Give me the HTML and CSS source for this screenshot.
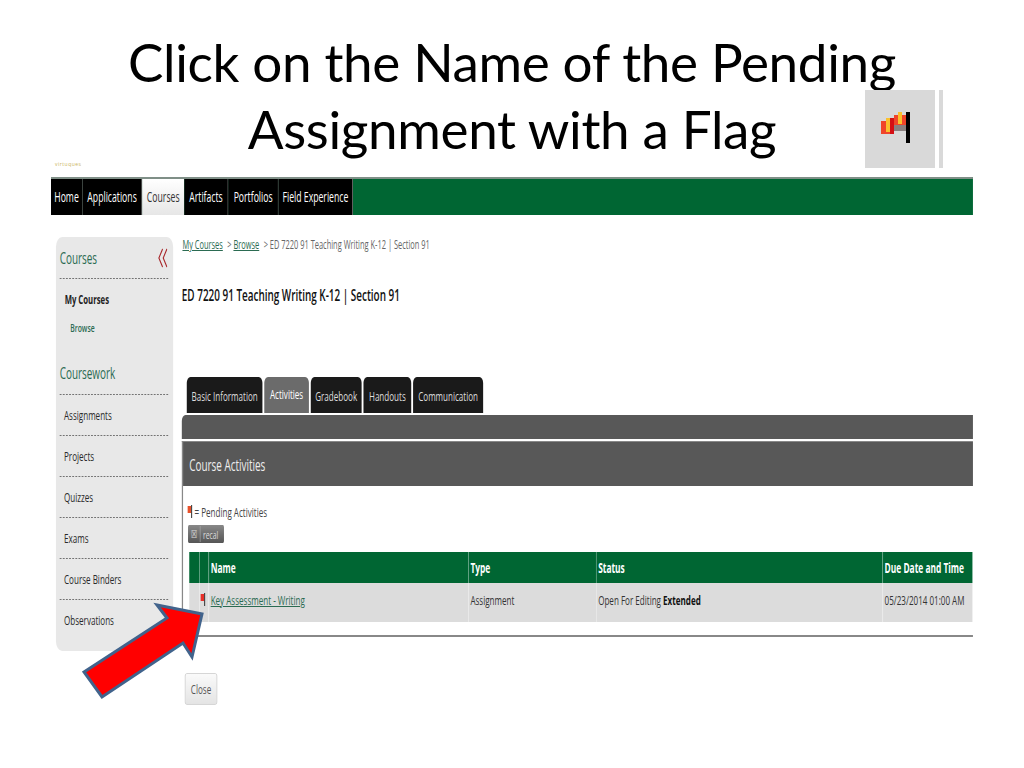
FILE: index.html
```html
<!DOCTYPE html>
<html lang="en">
<head>
  <meta charset="UTF-8">
  <title>Click on the Name of the Pending Assignment with a Flag</title>
  <link rel="stylesheet" href="styles.css">
</head>
<body>
  <div class="slide">
    <h1 class="title">Click on the Name of the Pending<br>Assignment with a Flag</h1>

    <div class="flag-box">
      <svg width="70" height="78" viewBox="0 0 70 78">
        <rect x="16" y="31" width="13" height="13" fill="#f0452a"/>
        <rect x="21" y="28" width="4" height="14" fill="#fbc02d"/>
        <rect x="25" y="28" width="4" height="16" fill="#d40f14"/>
        <rect x="29" y="25" width="12" height="13" fill="#f0452a"/>
        <rect x="33" y="22" width="4" height="12" fill="#fbc02d"/>
        <rect x="29" y="35" width="12" height="6" fill="#8a8080"/>
        <rect x="41" y="22" width="4" height="31" fill="#000"/>
      </svg>
    </div>
    <div class="flag-strip"></div>
    <p class="tiny">virtuques</p>

    <div class="shot">
      <div class="shot-inner">
        <ul class="nav">
          <li class="nav-home">Home</li>
          <li class="nav-apps">Applications</li>
          <li class="nav-courses">Courses</li>
          <li class="nav-artifacts">Artifacts</li>
          <li class="nav-portfolios">Portfolios</li>
          <li class="nav-field">Field Experience</li>
        </ul>

        <div class="main">
          <div class="sidebar">
            <div class="side-head">Courses
              <svg class="collapse" width="16" height="20" viewBox="0 0 16 20">
                <polyline points="8,1 2,10 8,19" fill="none" stroke="#a8282c" stroke-width="1.6"/>
                <polyline points="15,1 9,10 15,19" fill="none" stroke="#a8282c" stroke-width="1.6"/>
              </svg>
            </div>
            <div class="side-my">My Courses</div>
            <div class="side-browse">Browse</div>
            <div class="side-head side-work">Coursework</div>
            <div class="side-item">Assignments</div>
            <div class="side-item">Projects</div>
            <div class="side-item">Quizzes</div>
            <div class="side-item">Exams</div>
            <div class="side-item">Course Binders</div>
            <div class="side-item last">Observations</div>
          </div>

          <div class="content">
            <p class="crumbs"><a>My Courses</a> &gt; <a>Browse</a> &gt; ED 7220 91 Teaching Writing K-12 | Section 91</p>
            <h2 class="course-name">ED 7220 91 Teaching Writing K-12 | Section 91</h2>

            <div class="tabs">
              <div class="tab tab-basic">Basic Information</div>
              <div class="tab tab-act">Activities</div>
              <div class="tab tab-grade">Gradebook</div>
              <div class="tab tab-hand">Handouts</div>
              <div class="tab tab-comm">Communication</div>
            </div>
            <div class="tab-bar"></div>

            <div class="panel">
              <div class="panel-head">Course Activities</div>
              <div class="panel-body">
                <div class="legend">
                  <svg class="mini-flag" width="8" height="14" viewBox="0 0 8 14">
                    <rect x="0" y="1" width="6" height="7" fill="#e8502a"/>
                    <rect x="6" y="0" width="2" height="13" fill="#333"/>
                  </svg>
                  = Pending Activities
                </div>
                <div class="recall"><span class="recall-x">☒</span><span class="recall-text">recal</span></div>
                <table class="grid">
                  <tr>
                    <th class="c1"></th>
                    <th class="c2"></th>
                    <th class="c3">Name</th>
                    <th class="c4">Type</th>
                    <th class="c5">Status</th>
                    <th class="c6">Due Date and Time</th>
                  </tr>
                  <tr>
                    <td></td>
                    <td class="flag-cell">
                      <svg class="mini-flag" width="8" height="14" viewBox="0 0 8 14">
                        <rect x="0" y="1" width="6" height="7" fill="#e8302a"/>
                        <rect x="6" y="0" width="2" height="13" fill="#333"/>
                      </svg>
                    </td>
                    <td><a class="key-link">Key Assessment - Writing</a></td>
                    <td>Assignment</td>
                    <td>Open For Editing <b>Extended</b></td>
                    <td>05/23/2014 01:00 AM</td>
                  </tr>
                </table>
              </div>
            </div>

            <div class="close-btn">Close</div>
          </div>
        </div>
      </div>
    </div>

    <svg class="arrow" width="140" height="120" viewBox="0 0 140 120">
      <polygon points="75,11 120,20 110,63 101,49 20,103 2,78 85,24" fill="#ff0000" stroke="#41638c" stroke-width="3"/>
    </svg>
  </div>
</body>
</html>
```

FILE: styles.css
```css
/* slide page, the web app picture inside is squeezed sideways */
* {
  box-sizing: border-box;
}
body {
  margin: 0;
  background: #fff;
}
.slide {
  position: relative;
  width: 1024px;
  height: 768px;
  overflow: hidden;
  font-family: "Open Sans", "Liberation Sans", sans-serif;
}
.title {
  margin: 0;
  padding-top: 28px;
  height: 177px;
  text-align: center;
  font-family: Lato, "Open Sans", sans-serif;
  font-weight: 400;
  font-size: 53px;
  letter-spacing: -0.35px;
  line-height: 67px;
  color: #000;
}
.flag-box {
  position: absolute;
  left: 865px;
  top: 90px;
  width: 70px;
  height: 78px;
  background: #d9d9d9;
}
.flag-strip {
  position: absolute;
  left: 939px;
  top: 90px;
  width: 4px;
  height: 78px;
  background: #d9d9d9;
}
.tiny {
  position: absolute;
  left: 55px;
  top: 161px;
  margin: 0;
  font-size: 5px;
  line-height: 6px;
  letter-spacing: 0.5px;
  color: #c9b25a;
}
.arrow {
  position: absolute;
  left: 82px;
  top: 594px;
}

/* picture of the app */
.shot {
  width: 922px;
  margin-left: 51px;
  height: 591px;
  overflow: hidden;
}
.shot-inner {
  width: 1487px;
  transform: scaleX(0.62);
  transform-origin: 0 0;
}
.nav {
  display: flex;
  list-style: none;
  margin: 0;
  padding: 0;
  height: 38px;
  background: #006633;
  border-top: 2px solid #7f8f87;
}
.nav li {
  background: #000;
  color: #fff;
  font-size: 14px;
  line-height: 36px;
  text-align: center;
  border-right: 1px solid #999;
}
.nav-home { width: 51px; }
.nav-apps { width: 96px; }
.nav-courses {
  width: 68px;
  background: linear-gradient(#fff, #e6e6e6) !important;
  color: #333 !important;
  border-right: none !important;
}
.nav-artifacts { width: 71px; }
.nav-portfolios { width: 81px; }
.nav-field { width: 120px; }

.main {
  display: flex;
  padding: 22px 0 0 8px;
}
.sidebar {
  width: 189px;
  height: 414px;
  flex-shrink: 0;
  padding: 0 8px 0 6px;
  background: #e8e8e8;
  border-radius: 10px;
  color: #333;
}
.side-head {
  position: relative;
  height: 42px;
  padding: 9px 0 0 0;
  font-size: 16px;
  line-height: 24px;
  color: #2b6b52;
  border-bottom: 1px dashed #555;
}
.collapse {
  position: absolute;
  right: 1px;
  top: 11px;
}
.side-my {
  padding-left: 8px;
  margin-top: 12px;
  font-size: 12.5px;
  font-weight: 700;
  line-height: 18px;
  color: #222;
}
.side-browse {
  padding-left: 17px;
  margin-top: 10px;
  font-size: 11px;
  font-weight: 600;
  line-height: 18px;
  color: #2b6b52;
}
.side-work {
  margin-top: 18px;
  height: 40px;
  padding-top: 6px;
}
.side-item {
  height: 41px;
  padding-left: 7px;
  font-size: 13px;
  line-height: 41px;
  color: #2a2a2a;
  border-bottom: 1px dashed #555;
}
.side-item.last {
  border-bottom: none;
}

.content {
  width: 1276px;
  margin-left: 14px;
  flex-shrink: 0;
}
.crumbs {
  margin: 0;
  padding-left: 1px;
  font-size: 12px;
  line-height: 15px;
  color: #666;
}
.crumbs a {
  margin-right: 4px;
  color: #2b6b52;
  text-decoration: underline;
}
.course-name {
  margin: 31px 0 0 0;
  font-size: 16px;
  font-weight: 600;
  line-height: 24px;
  color: #111;
}
.tabs {
  display: flex;
  gap: 3px;
  height: 36px;
  margin: 70px 0 0 8px;
}
.tab {
  background: #1a1a1a;
  color: #ddd;
  font-size: 13px;
  line-height: 38px;
  text-align: center;
  border-radius: 6px 6px 0 0;
}
.tab-basic { width: 122px; }
.tab-act {
  width: 72px;
  background: #6b6b6b;
  color: #fff;
  line-height: 34px;
}
.tab-grade { width: 82px; }
.tab-hand { width: 77px; }
.tab-comm { width: 113px; }
.tab-bar {
  height: 24px;
  margin-top: 2px;
  background: #585858;
  border-radius: 6px 0 0 0;
}
.panel {
  height: 196px;
  margin-top: 2px;
  border: 1px solid #888;
  border-width: 1px 0 2px 2px;
}
.panel-head {
  height: 44px;
  padding-left: 10px;
  background: #585858;
  color: #eee;
  font-size: 16px;
  line-height: 46px;
}
.panel-body {
  padding: 19px 0 0 10px;
}
.legend {
  height: 15px;
  margin-left: -3px;
  font-size: 13px;
  line-height: 15px;
  color: #444;
}
.mini-flag {
  vertical-align: -2px;
}
.recall {
  display: flex;
  align-items: center;
  width: 58px;
  height: 18px;
  margin-top: 5px;
  margin-left: -2px;
  background: linear-gradient(#888, #555);
  border-radius: 2px;
  color: #ddd;
  font-size: 11px;
}
.recall-x {
  width: 20px;
  text-align: center;
  border-right: 1px solid #aaa;
  line-height: 16px;
}
.recall-text {
  padding-left: 4px;
}
.grid {
  width: 1263px;
  margin-top: 9px;
  border-collapse: collapse;
  table-layout: fixed;
  font-size: 13px;
}
.grid th {
  height: 31px;
  padding: 0 0 0 3px;
  background: #006633;
  color: #fff;
  text-align: left;
  font-size: 13.5px;
  font-weight: 700;
  border-right: 1px solid #7fb39a;
}
.grid td {
  height: 39px;
  padding: 0 0 0 3px;
  background: #dcdcdc;
  color: #333;
  border-right: 1px solid #eee;
  vertical-align: middle;
  padding-bottom: 5px;
}
.grid td b {
  color: #111;
}
.c1 { width: 16px; }
.c2 { width: 15px; }
.c3 { width: 419px; }
.c4 { width: 206px; }
.c5 { width: 462px; }
.c6 { width: 145px; }
.key-link {
  color: #2b6b52;
  font-size: 13px;
  text-decoration: underline;
}
.grid .flag-cell {
  padding: 0 0 5px 1px;
}
.close-btn {
  width: 52px;
  height: 32px;
  margin: 36px 0 0 5px;
  background: linear-gradient(#fafafa, #e4e4e4);
  border: 1px solid #ccc;
  border-radius: 3px;
  color: #555;
  font-size: 13px;
  line-height: 30px;
  text-align: center;
}
```
